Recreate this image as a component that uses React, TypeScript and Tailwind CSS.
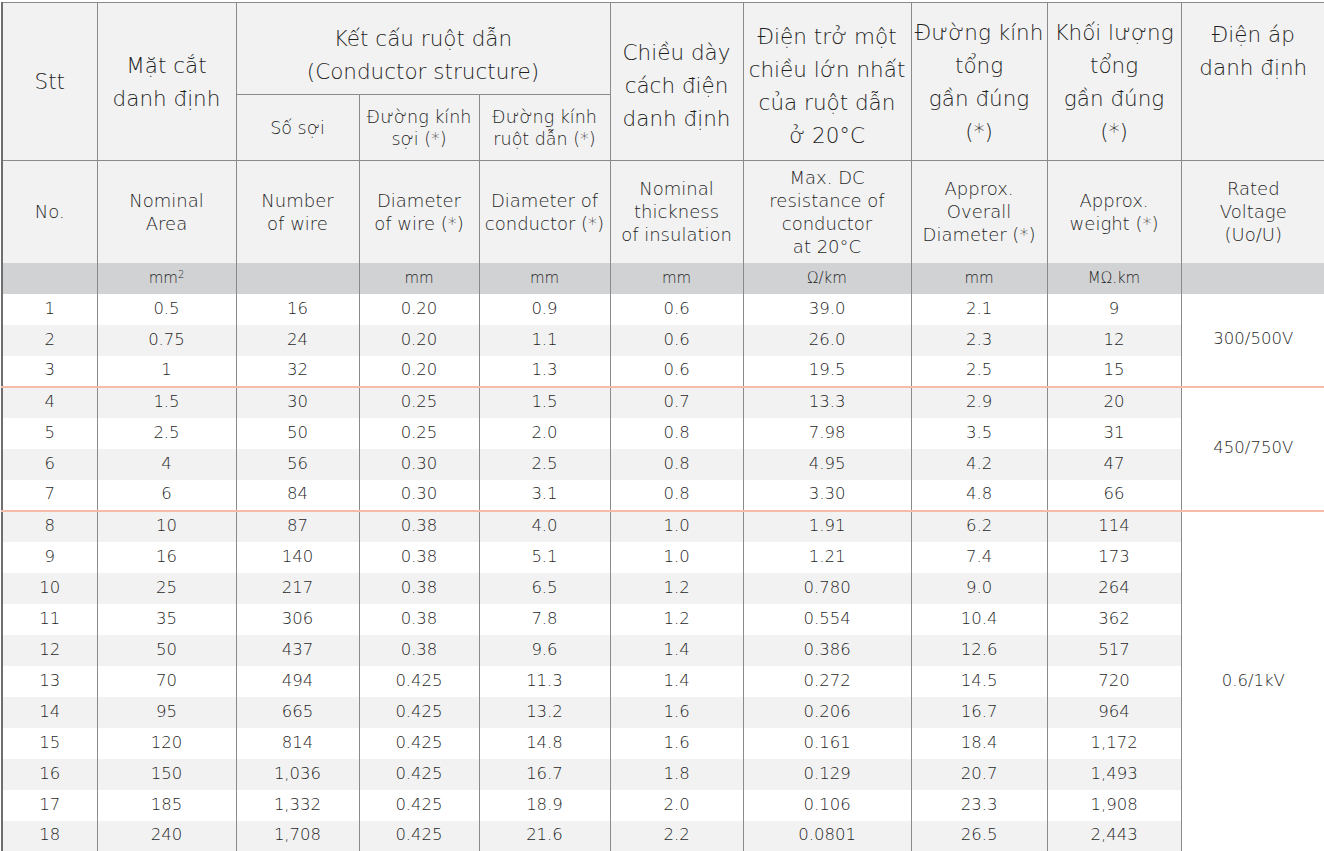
const rows: string[][] = [
  ["1", "0.5", "16", "0.20", "0.9", "0.6", "39.0", "2.1", "9"],
  ["2", "0.75", "24", "0.20", "1.1", "0.6", "26.0", "2.3", "12"],
  ["3", "1", "32", "0.20", "1.3", "0.6", "19.5", "2.5", "15"],
  ["4", "1.5", "30", "0.25", "1.5", "0.7", "13.3", "2.9", "20"],
  ["5", "2.5", "50", "0.25", "2.0", "0.8", "7.98", "3.5", "31"],
  ["6", "4", "56", "0.30", "2.5", "0.8", "4.95", "4.2", "47"],
  ["7", "6", "84", "0.30", "3.1", "0.8", "3.30", "4.8", "66"],
  ["8", "10", "87", "0.38", "4.0", "1.0", "1.91", "6.2", "114"],
  ["9", "16", "140", "0.38", "5.1", "1.0", "1.21", "7.4", "173"],
  ["10", "25", "217", "0.38", "6.5", "1.2", "0.780", "9.0", "264"],
  ["11", "35", "306", "0.38", "7.8", "1.2", "0.554", "10.4", "362"],
  ["12", "50", "437", "0.38", "9.6", "1.4", "0.386", "12.6", "517"],
  ["13", "70", "494", "0.425", "11.3", "1.4", "0.272", "14.5", "720"],
  ["14", "95", "665", "0.425", "13.2", "1.6", "0.206", "16.7", "964"],
  ["15", "120", "814", "0.425", "14.8", "1.6", "0.161", "18.4", "1,172"],
  ["16", "150", "1,036", "0.425", "16.7", "1.8", "0.129", "20.7", "1,493"],
  ["17", "185", "1,332", "0.425", "18.9", "2.0", "0.106", "23.3", "1,908"],
  ["18", "240", "1,708", "0.425", "21.6", "2.2", "0.0801", "26.5", "2,443"],
]

// voltage groups: [start row, span, label]
const groups: Record<number, [number, string]> = {
  0: [3, "300/500V"],
  3: [4, "450/750V"],
  7: [11, "0.6/1kV"],
}

const widths = [95, 139, 123, 120, 131, 133, 168, 136, 134, 144]

const line = "border-[#8a8a8a]"
const vi = "text-[21.5px] leading-[33px] whitespace-nowrap"
const en = "text-[18px] leading-[23px] whitespace-nowrap"
const sub = "text-[17.5px] leading-[22px] whitespace-nowrap"

export default function App() {
  return (
    <div className="w-[1324px] h-[851px] overflow-hidden bg-white pt-[2px] pl-px font-['DejaVu_Sans','Noto_Sans',sans-serif] font-extralight text-[#1f1f1f]">
      <table className="table-fixed border-collapse w-[1323px] text-center border-l-2 border-l-[#6e6e6e]">
        <colgroup>
          {widths.map((w, i) => (
            <col key={i} style={{ width: w }} />
          ))}
        </colgroup>
        <thead className="bg-[#f2f2f2]">
          <tr className="h-[92px]">
            <th rowSpan={2} className={`font-extralight border ${line} ${vi}`}>Stt</th>
            <th rowSpan={2} className={`font-extralight border ${line} ${vi}`}>
              Mặt cắt
              <br />
              danh định
            </th>
            <th colSpan={3} className={`font-extralight border ${line} ${vi} pt-3`}>
              Kết cấu ruột dẫn
              <br />
              (Conductor structure)
            </th>
            <th rowSpan={2} className={`font-extralight border ${line} ${vi} pt-2`}>
              Chiều dày
              <br />
              cách điện
              <br />
              danh định
            </th>
            <th rowSpan={2} className={`font-extralight border ${line} ${vi} pt-2`}>
              Điện trở một
              <br />
              chiều lớn nhất
              <br />
              của ruột dẫn
              <br />ở 20°C
            </th>
            <th rowSpan={2} className={`font-extralight border ${line} ${vi}`}>
              Đường kính
              <br />
              tổng
              <br />
              gần đúng
              <br />
              (*)
            </th>
            <th rowSpan={2} className={`font-extralight border ${line} ${vi}`}>
              Khối lượng
              <br />
              tổng
              <br />
              gần đúng
              <br />
              (*)
            </th>
            <th rowSpan={2} className={`font-extralight border-y border-l ${line} ${vi} align-top pt-[15px]`}>
              Điện áp
              <br />
              danh định
            </th>
          </tr>
          <tr className="h-[66px]">
            <th className={`font-extralight border ${line} ${sub}`}>Số sợi</th>
            <th className={`font-extralight border ${line} ${sub}`}>
              Đường kính
              <br />
              sợi (*)
            </th>
            <th className={`font-extralight border ${line} ${sub}`}>
              Đường kính
              <br />
              ruột dẫn (*)
            </th>
          </tr>
          <tr className="h-[102px]">
            <th className={`font-extralight border-x ${line} ${en}`}>No.</th>
            <th className={`font-extralight border-x ${line} ${en}`}>
              Nominal
              <br />
              Area
            </th>
            <th className={`font-extralight border-x ${line} ${en}`}>
              Number
              <br />
              of wire
            </th>
            <th className={`font-extralight border-x ${line} ${en}`}>
              Diameter
              <br />
              of wire (*)
            </th>
            <th className={`font-extralight border-x ${line} ${en}`}>
              Diameter of
              <br />
              conductor (*)
            </th>
            <th className={`font-extralight border-x ${line} ${en}`}>
              Nominal
              <br />
              thickness
              <br />
              of insulation
            </th>
            <th className={`font-extralight border-x ${line} ${en}`}>
              Max. DC
              <br />
              resistance of
              <br />
              conductor
              <br />
              at 20°C
            </th>
            <th className={`font-extralight border-x ${line} ${en}`}>
              Approx.
              <br />
              Overall
              <br />
              Diameter (*)
            </th>
            <th className={`font-extralight border-x ${line} ${en}`}>
              Approx.
              <br />
              weight (*)
            </th>
            <th className={`font-extralight border-l ${line} ${en}`}>
              Rated
              <br />
              Voltage
              <br />
              (Uo/U)
            </th>
          </tr>
          <tr className="h-[31px] bg-[#d1d2d4] text-[15px]">
            {["", "mm2", "", "mm", "mm", "mm", "Ω/km", "mm", "MΩ.km", ""].map((u, i) => (
              <th key={i} className={`font-extralight ${i < 9 ? `border-x ${line}` : `border-l ${line}`}`}>
                {u === "mm2" ? (
                  <>
                    mm<sup className="text-[10px]">2</sup>
                  </>
                ) : (
                  u
                )}
              </th>
            ))}
          </tr>
        </thead>
        <tbody className="text-[16.5px]">
          {rows.map((r, ri) => {
            const groupTop = ri === 3 || ri === 7
            const last = ri === rows.length - 1
            return (
              <tr key={ri} className={`h-[31px] ${ri % 2 === 1 ? "bg-[#f2f2f2]" : "bg-white"}`}>
                {r.map((v, ci) => (
                  <td
                    key={ci}
                    className={`border-x ${line} ${groupTop ? "border-t-2 border-t-[#f5bda9]" : ""} ${
                      last ? "border-b" : ""
                    }`}
                  >
                    {v}
                  </td>
                ))}
                {groups[ri] && (
                  <td
                    rowSpan={groups[ri][0]}
                    className={`bg-white border-l ${line} ${ri > 0 ? "border-t-2 border-t-[#f5bda9]" : ""}`}
                  >
                    {groups[ri][1]}
                  </td>
                )}
              </tr>
            )
          })}
        </tbody>
      </table>
    </div>
  )
}
